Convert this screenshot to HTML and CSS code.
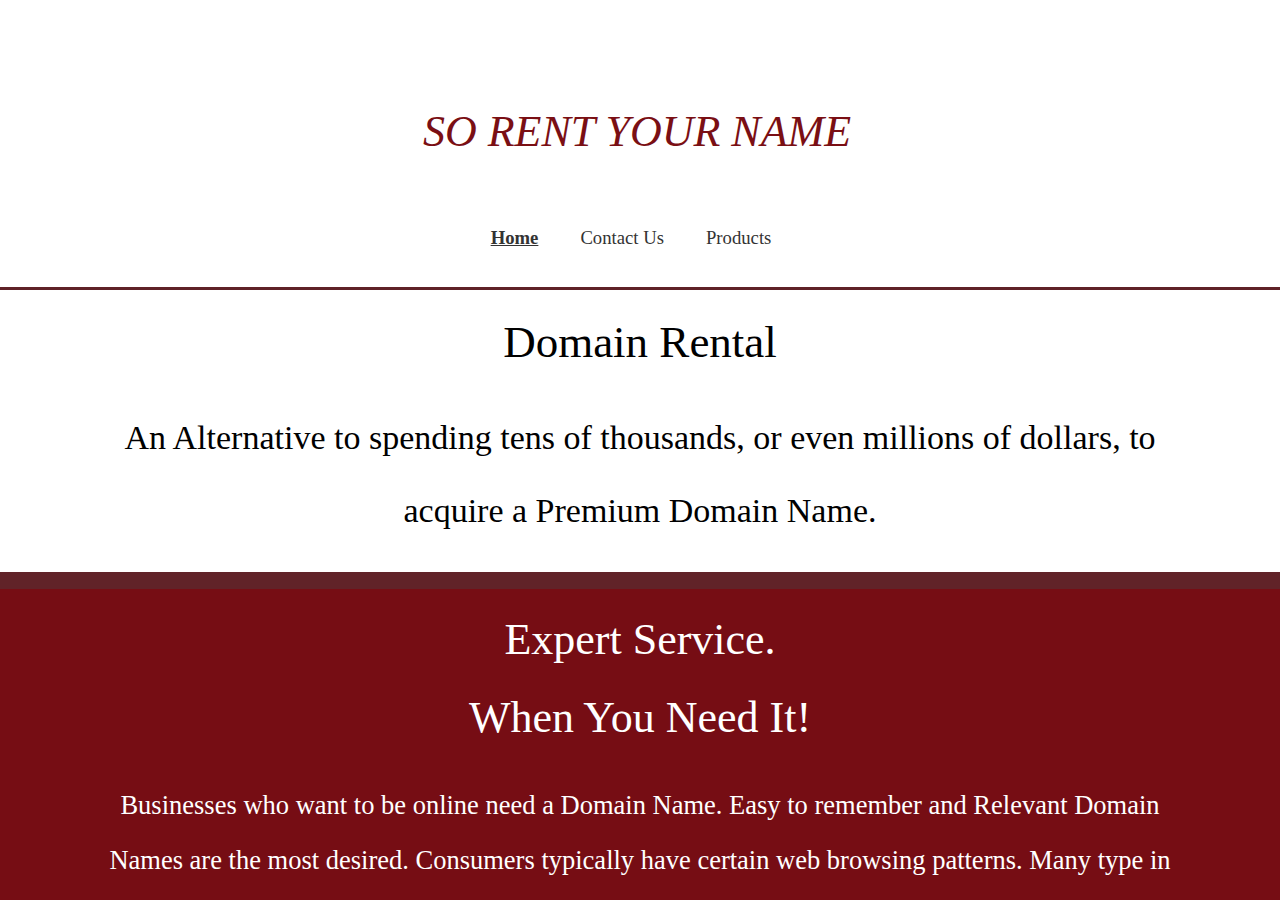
FILE: index.html
```html
<!DOCTYPE html>
<html lang="en">
<head>
<meta charset="utf-8">
<title>So Rent Your Name</title>
<link rel="stylesheet" href="styles.css">
</head>
<body>
<header class="site-header">
  <h1 class="brand">SO RENT YOUR NAME</h1>
  <nav class="nav">
    <a class="nav-link active" href="#">Home</a>
    <a class="nav-link" href="#">Contact Us</a>
    <a class="nav-link" href="#">Products</a>
  </nav>
</header>
<section class="intro">
  <h2 class="intro-title">Domain Rental</h2>
  <p class="intro-text">An Alternative to spending tens of thousands, or even millions of dollars, to acquire a Premium Domain Name.</p>
</section>
<div class="band"></div>
<section class="service">
  <h2 class="service-title">Expert Service.</h2>
  <h2 class="service-title">When You Need It!</h2>
  <p class="service-text">Businesses who want to be online need a Domain Name. Easy to remember and Relevant Domain Names are the most desired. Consumers typically have certain web browsing patterns. Many type in the name of the product or service they are looking for directly into the browser address bar, followed by .com.</p>
</section>
</body>
</html>
```
FILE: styles.css
```css
html, body {
  margin: 0;
  padding: 0;
  background: #ffffff;
  font-family: "Liberation Serif", "DejaVu Serif", serif;
}
.site-header {
  padding-top: 104px;
  border-bottom: 3px solid #5f2227;
}
.brand {
  margin: 0;
  padding-right: 6px;
  text-align: center;
  font-style: italic;
  font-weight: normal;
  font-size: 44px;
  line-height: 56px;
  color: #7a0f14;
}
.nav {
  display: flex;
  justify-content: center;
  gap: 42px;
  padding: 67px 18px 38px 0;
}
.nav-link {
  font-size: 18.7px;
  line-height: 22px;
  color: #333333;
  text-decoration: none;
}
.nav-link.active {
  font-weight: bold;
  text-decoration: underline;
}
.intro {
  max-width: 1080px;
  margin: 0 auto;
  text-align: center;
  padding: 26px 0 25px;
}
.intro-title {
  margin: 0;
  font-weight: normal;
  font-size: 45px;
  line-height: 52px;
  color: #000;
}
.intro-text {
  margin: 33px 0 0;
  font-size: 34px;
  line-height: 73px;
  color: #000;
}
.band {
  height: 17px;
  background: #612328;
}
.service {
  background: #760d14;
  color: #ffffff;
  text-align: center;
  padding: 12px 0 40px;
}
.service-title {
  margin: 0;
  font-weight: normal;
  font-size: 44px;
  line-height: 78px;
}
.service-text {
  max-width: 1080px;
  margin: 21px auto 0;
  font-size: 26.5px;
  line-height: 55px;
}
```
